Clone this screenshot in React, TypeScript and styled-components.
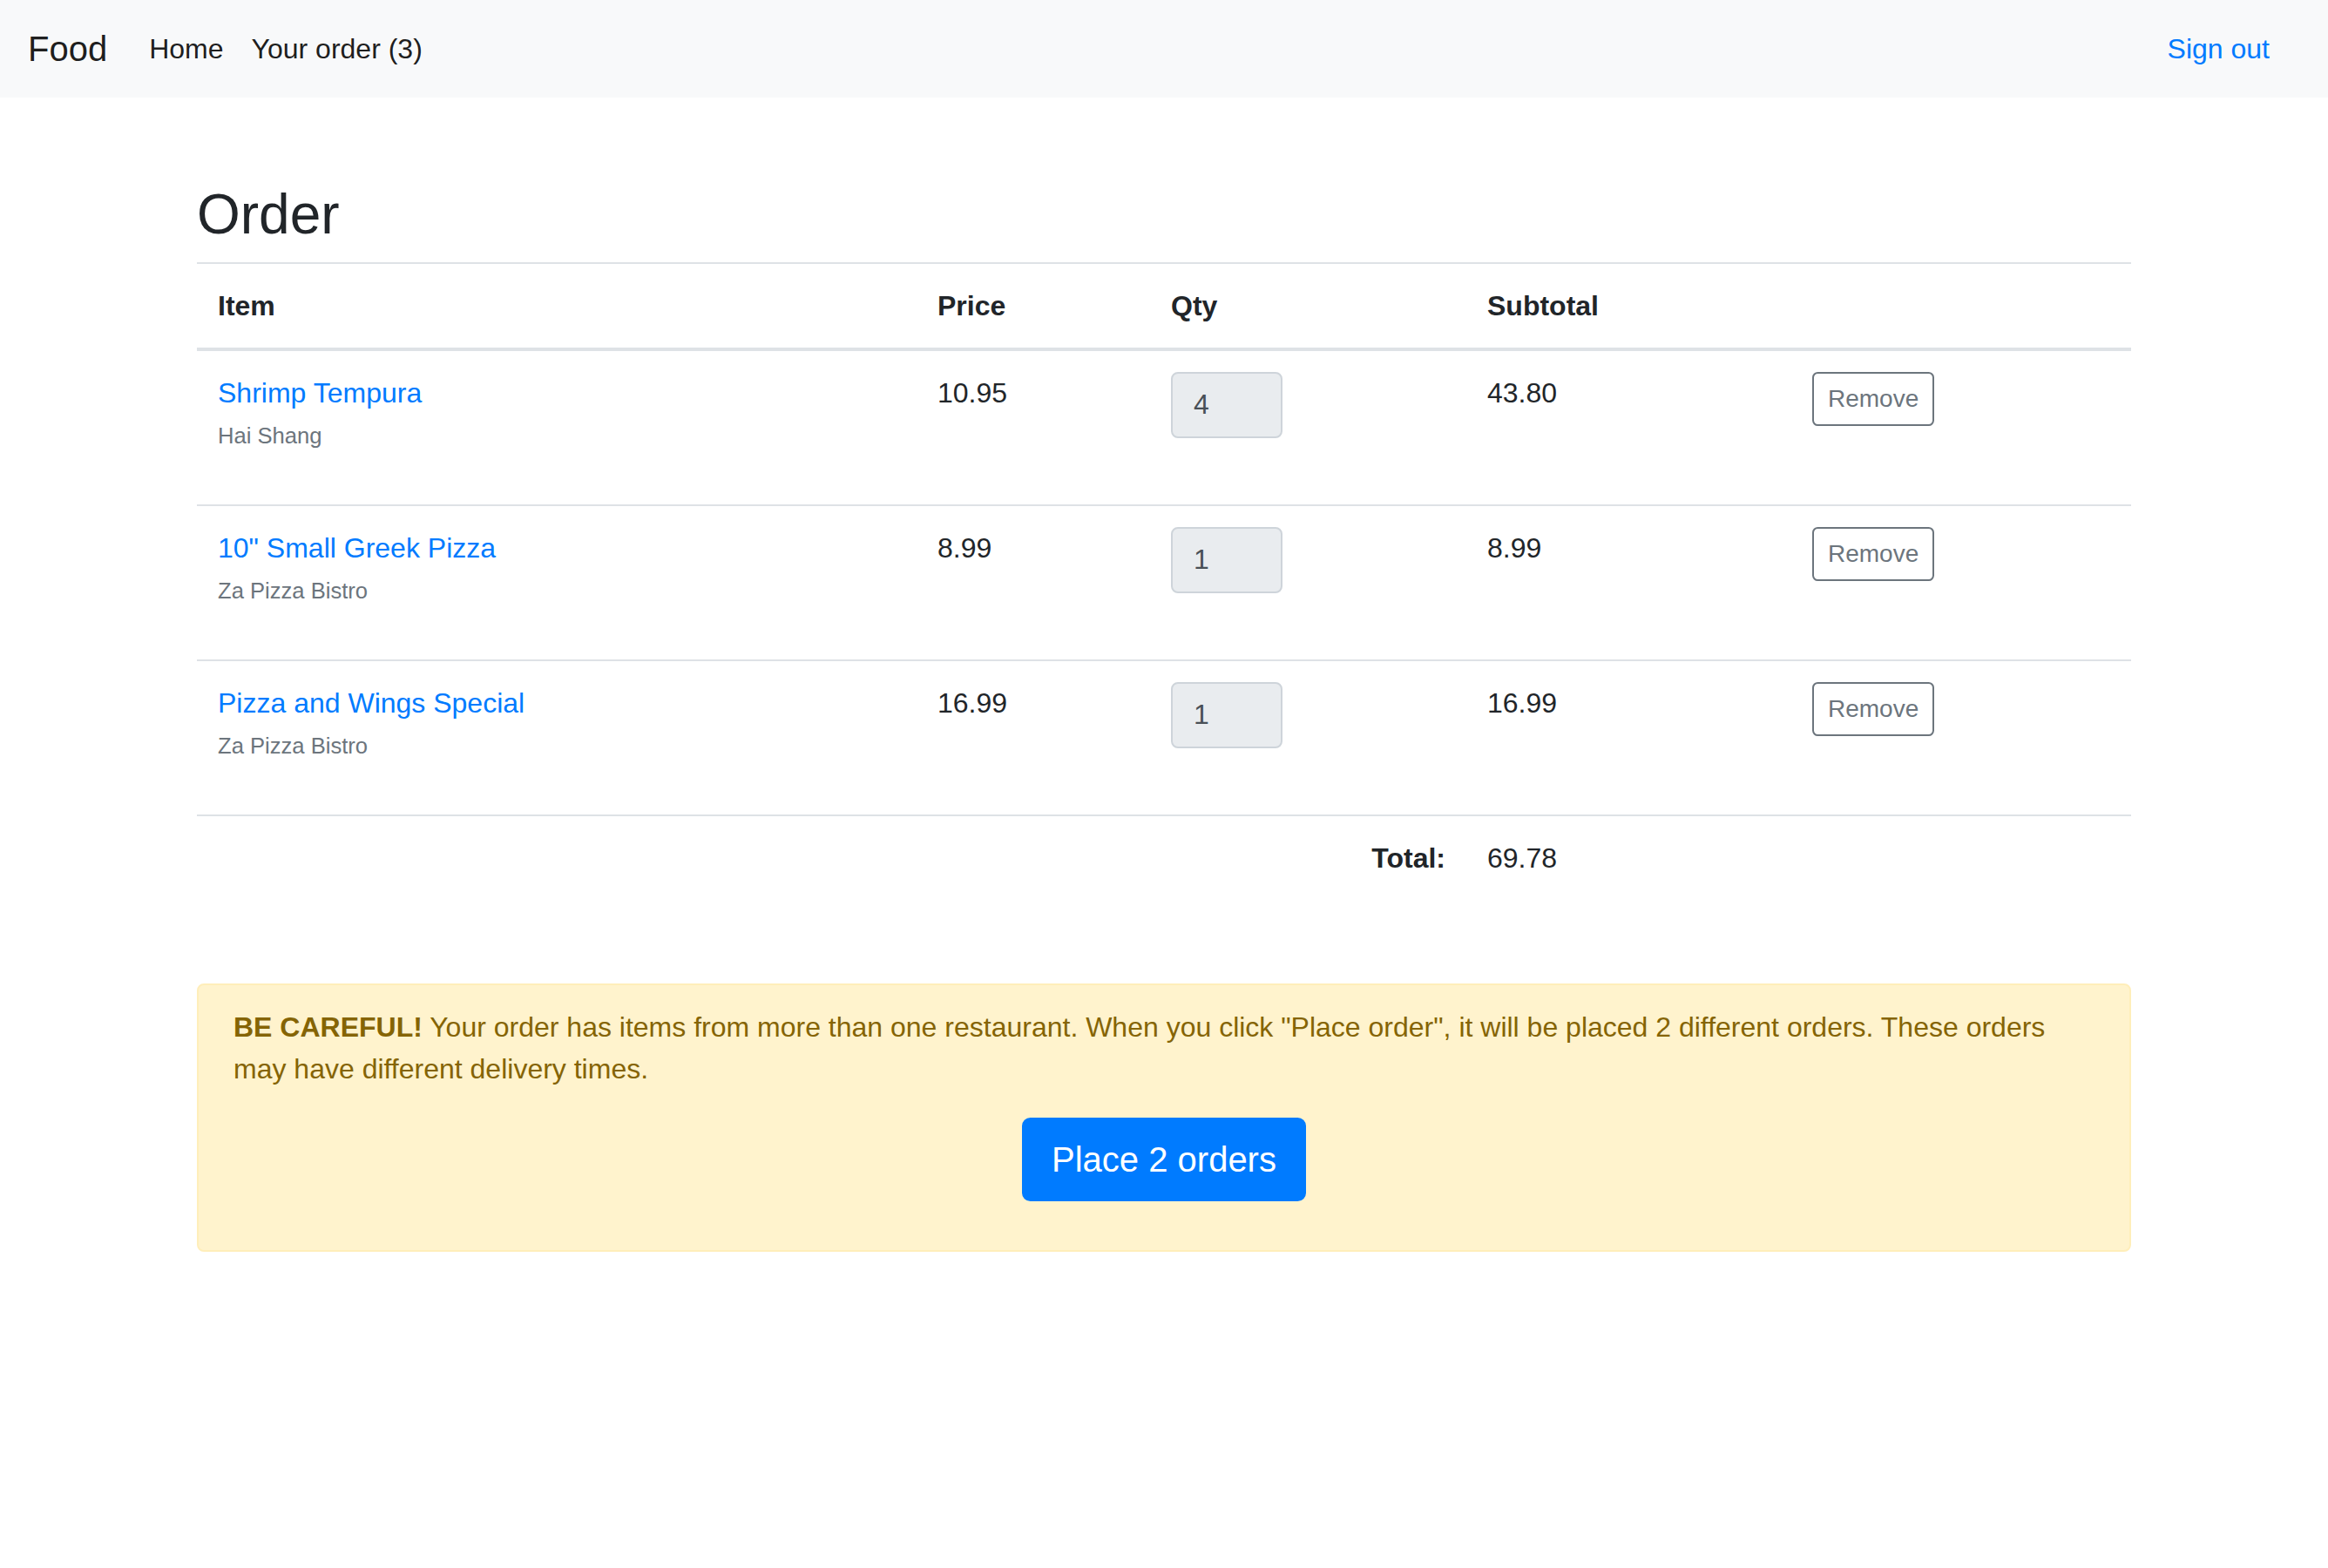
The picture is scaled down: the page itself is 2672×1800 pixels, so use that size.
import React from "react";
import styled, { createGlobalStyle } from "styled-components";

const GlobalStyle = createGlobalStyle`
  html, body { margin: 0; padding: 0; background: #ffffff; }
  body {
    font-family: "Liberation Sans", Arial, sans-serif;
    font-size: 32px;
    line-height: 1.5;
    color: #212529;
  }
  * { box-sizing: border-box; }
`;

const Navbar = styled.nav`
  display: flex;
  align-items: center;
  background: #f8f9fa;
  padding: 16px 32px;
  height: 112px;
`;

const Brand = styled.a`
  font-size: 40px;
  line-height: 60px;
  padding: 10px 0;
  margin-right: 32px;
  color: rgba(0, 0, 0, 0.9);
  text-decoration: none;
`;

const NavList = styled.div`
  display: flex;
  align-items: center;
`;

const NavLink = styled.a`
  padding: 16px;
  line-height: 48px;
  color: rgba(0, 0, 0, 0.9);
  text-decoration: none;
`;

const SignOut = styled.a`
  margin-left: auto;
  padding: 16px 35px 16px 16px;
  line-height: 48px;
  color: #007bff;
  text-decoration: none;
`;

const Container = styled.main`
  width: 2220px;
  margin: 96px auto 0;
`;

const Title = styled.h2`
  font-size: 64px;
  font-weight: 500;
  line-height: 1.2;
  margin: 0 0 16px;
`;

const Table = styled.table`
  width: 100%;
  table-layout: fixed;
  border-collapse: collapse;
  margin-bottom: 32px;
`;

const Th = styled.th<{ $w?: number; $right?: boolean }>`
  ${(p) => (p.$w ? `width: ${p.$w}px;` : "")}
  text-align: ${(p) => (p.$right ? "right" : "left")};
  font-weight: 700;
  padding: 24px;
  vertical-align: bottom;
  border-top: 2px solid #dee2e6;
`;

const HeadTh = styled(Th)`
  border-bottom: 4px solid #dee2e6;
`;

const TotalTh = styled(Th)`
  vertical-align: top;
`;

const Td = styled.td`
  padding: 24px;
  vertical-align: top;
  border-top: 2px solid #dee2e6;
`;

const ItemLink = styled.a`
  display: block;
  color: #007bff;
  text-decoration: none;
  line-height: 48px;
`;

const Restaurant = styled.div`
  font-size: 25.6px;
  line-height: 50px;
  color: #6c757d;
  margin-bottom: 30px;
`;

const QtyInput = styled.input`
  display: block;
  width: 128px;
  height: 76px;
  padding: 12px 24px;
  font-family: inherit;
  font-size: 32px;
  line-height: 1.5;
  color: #495057;
  background: #e9ecef;
  border: 2px solid #ced4da;
  border-radius: 8px;
  outline: none;
`;

const RemoveButton = styled.button`
  font-family: inherit;
  font-size: 28px;
  line-height: 1.5;
  padding: 8px 16px;
  color: #6c757d;
  background: transparent;
  border: 2px solid #6c757d;
  border-radius: 6.4px;
  cursor: pointer;
`;

const Alert = styled.div`
  margin-top: 96px;
  padding: 24px 40px;
  background: #fff3cd;
  border: 2px solid #ffeeba;
  border-radius: 8px;
  color: #856404;
`;

const AlertText = styled.p`
  margin: 0 0 32px;
`;

const Center = styled.div`
  text-align: center;
  margin-bottom: 32px;
`;

const PrimaryButton = styled.button`
  font-family: inherit;
  font-size: 40px;
  line-height: 1.5;
  padding: 16px 32px;
  color: #ffffff;
  background: #007bff;
  border: 2px solid #007bff;
  border-radius: 9.6px;
  cursor: pointer;
`;

const items = [
  { name: "Shrimp Tempura", restaurant: "Hai Shang", price: "10.95", qty: "4", subtotal: "43.80" },
  { name: '10" Small Greek Pizza', restaurant: "Za Pizza Bistro", price: "8.99", qty: "1", subtotal: "8.99" },
  { name: "Pizza and Wings Special", restaurant: "Za Pizza Bistro", price: "16.99", qty: "1", subtotal: "16.99" },
];

export default function App() {
  return (
    <>
      <GlobalStyle />
      <Navbar>
        <Brand href="#">Food</Brand>
        <NavList>
          <NavLink href="#">Home</NavLink>
          <NavLink href="#">Your order (3)</NavLink>
        </NavList>
        <SignOut href="#">Sign out</SignOut>
      </Navbar>
      <Container>
        <Title>Order</Title>
        <Table>
          <thead>
            <tr>
              <HeadTh $w={826}>Item</HeadTh>
              <HeadTh $w={268}>Price</HeadTh>
              <HeadTh $w={363}>Qty</HeadTh>
              <HeadTh $w={373}>Subtotal</HeadTh>
              <HeadTh $w={390}></HeadTh>
            </tr>
          </thead>
          <tbody>
            {items.map((it) => (
              <tr key={it.name}>
                <Td>
                  <ItemLink href="#">{it.name}</ItemLink>
                  <Restaurant>{it.restaurant}</Restaurant>
                </Td>
                <Td>{it.price}</Td>
                <Td>
                  <QtyInput type="text" readOnly defaultValue={it.qty} />
                </Td>
                <Td>{it.subtotal}</Td>
                <Td>
                  <RemoveButton>Remove</RemoveButton>
                </Td>
              </tr>
            ))}
            <tr>
              <TotalTh colSpan={3} $right>
                Total:
              </TotalTh>
              <Td>69.78</Td>
              <Td></Td>
            </tr>
          </tbody>
        </Table>
        <Alert>
          <AlertText>
            <strong>BE CAREFUL!</strong> Your order has items from more than one restaurant. When you
            click "Place order", it will be placed 2 different orders. These orders may have different
            delivery times.
          </AlertText>
          <Center>
            <PrimaryButton>Place 2 orders</PrimaryButton>
          </Center>
        </Alert>
      </Container>
    </>
  );
}
